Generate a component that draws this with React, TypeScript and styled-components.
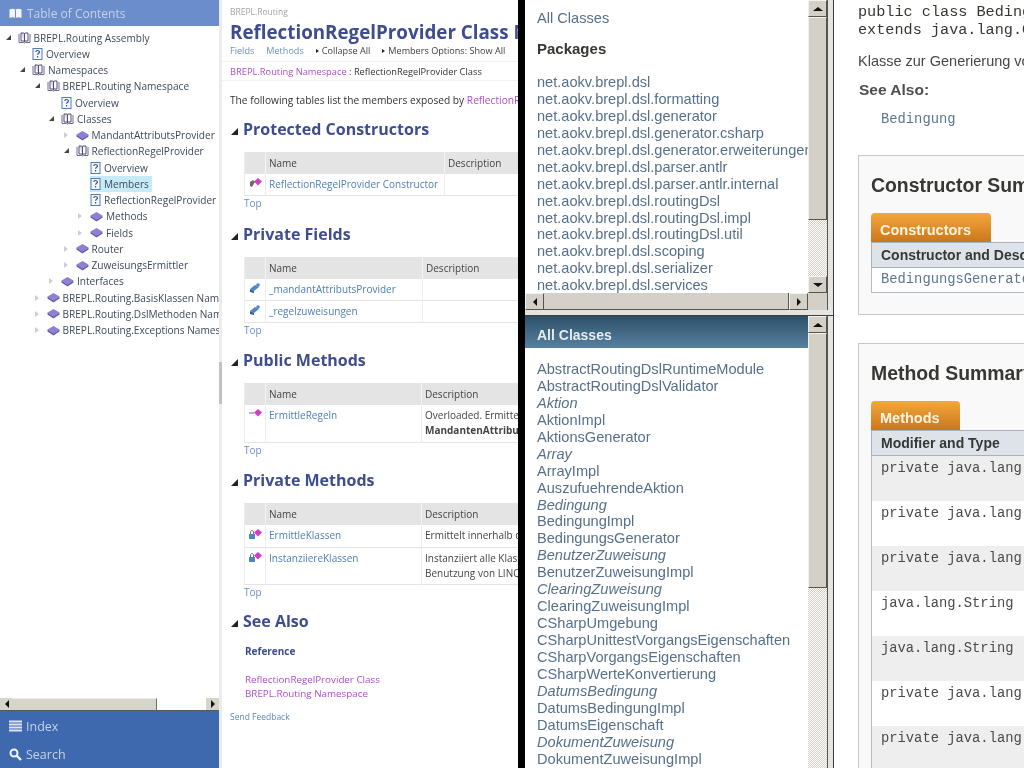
import React from "react";
import styled, { createGlobalStyle } from "styled-components";

const GlobalStyle = createGlobalStyle`
  html, body { margin: 0; padding: 0; background: #fff; overflow: hidden; }
  * { box-sizing: border-box; }
`;

const Page = styled.div`
  display: flex;
  width: 1024px;
  height: 768px;
  overflow: hidden;
  background: #fff;
  filter: blur(0.35px);
`;

/* ---------- shared win98 style scrollbar bits ---------- */

const ScrollBtn = styled.div<{ $size?: number }>`
  flex: none;
  width: ${(p) => p.$size ?? 19}px;
  height: ${(p) => p.$size ?? 17}px;
  display: flex;
  align-items: center;
  justify-content: center;
  background: #d4d0c8;
  border: 1px solid;
  border-color: #f4f2ec #55534e #55534e #f4f2ec;
`;

const Arrow = styled.i<{ $dir: "up" | "down" | "left" | "right" }>`
  display: block;
  width: 0;
  height: 0;
  border-style: solid;
  border-color: transparent;
  ${(p) =>
    p.$dir === "up"
      ? "border-width: 0 5px 4px 5px; border-bottom-color: #111;"
      : p.$dir === "down"
      ? "border-width: 4px 5px 0 5px; border-top-color: #111;"
      : p.$dir === "left"
      ? "border-width: 4px 4px 4px 0; border-right-color: #111;"
      : "border-width: 4px 0 4px 4px; border-left-color: #111;"}
`;

const Thumb = styled.div<{ $length: number; $axis: "x" | "y" }>`
  flex: none;
  ${(p) => (p.$axis === "y" ? `height: ${p.$length}px; width: 100%;` : `width: ${p.$length}px; height: 100%;`)}
  background: #d4d0c8;
  border: 1px solid;
  border-color: #f4f2ec #55534e #55534e #f4f2ec;
`;

const Dither = styled.div`
  flex: 1;
  background-color: #fff;
  background-image: repeating-conic-gradient(#d4d0c8 0 25%, #fff 0 50%);
  background-size: 2px 2px;
`;

/* ---------- left table of contents ---------- */

const TocPanel = styled.aside`
  flex: none;
  width: 219px;
  height: 100%;
  display: flex;
  flex-direction: column;
  font-family: "Open Sans", sans-serif;
`;

const TocHeader = styled.header`
  flex: none;
  height: 26px;
  display: flex;
  align-items: center;
  gap: 5px;
  padding-left: 9px;
  background: #6c8dcb;
  color: #c6d3ec;
  font-size: 12px;
`;

const Tree = styled.div`
  flex: 1;
  overflow: hidden;
  padding-top: 3.5px;
`;

const TreeRow = styled.div<{ $level: number }>`
  height: 16.25px;
  display: flex;
  align-items: center;
  padding-left: ${(p) => 4.5 + p.$level * 14.5}px;
  color: #3f4a58;
  font-size: 10.1px;
  white-space: nowrap;
`;

const Twist = styled.span<{ $open?: boolean; $none?: boolean }>`
  flex: none;
  width: 11px;
  height: 8px;
  position: relative;
  &::before {
    content: "";
    position: absolute;
    left: 1px;
    top: 1px;
    width: 0;
    height: 0;
    border-style: solid;
    ${(p) =>
      p.$none
        ? "border-width: 0;"
        : p.$open
        ? "border-width: 0 0 5px 5px; border-color: transparent transparent #444 transparent;"
        : "border-width: 3.5px 0 3.5px 4px; border-color: transparent transparent transparent #ccd0d4;"}
  }
`;

const TreeLabel = styled.span<{ $selected?: boolean }>`
  display: inline-flex;
  align-items: center;
  gap: 3px;
  padding: 1px 3px 1px 0;
  margin-left: 2px;
  background: ${(p) => (p.$selected ? "#c4ebf7" : "transparent")};
`;

const TocScroll = styled.div`
  flex: none;
  height: 13px;
  display: flex;
  background: #fff;
  border-bottom: 1px solid #5a5a58;
`;

const TocThumb = styled.div`
  width: 144px;
  background: #d7d5ca;
  border-right: 1px solid #6f6f6a;
  border-top: 1px solid #eeece4;
`;

const TocScrollBtn = styled.div`
  flex: none;
  width: 13px;
  display: flex;
  align-items: center;
  justify-content: center;
  background: #d7d5ca;
`;

const TocGap = styled.div`
  flex: 1;
`;

const TocFooter = styled.footer`
  flex: none;
  height: 57px;
  background: #3e69ae;
  display: flex;
  flex-direction: column;
  padding-top: 1px;
`;

const TocFooterItem = styled.div`
  height: 29.5px;
  display: flex;
  align-items: center;
  gap: 4px;
  padding-left: 9px;
  color: #c4d2ea;
  font-size: 12.5px;
`;

/* ---------- help viewer content ---------- */

const Splitter = styled.div`
  flex: none;
  width: 3px;
  height: 100%;
  background: #ececec;
  display: flex;
  flex-direction: column;
`;

const SplitterGrip = styled.div`
  height: 42px;
  margin-top: 362px;
  background: #c2c2c2;
`;

const HelpPane = styled.main`
  flex: none;
  width: 296px;
  height: 100%;
  overflow: hidden;
  padding-left: 8px;
  font-family: "Open Sans", sans-serif;
  font-size: 10px;
  color: #333;
  white-space: nowrap;
`;

const Crumb = styled.div`
  height: 12px;
  margin-top: 6px;
  line-height: 12px;
  font-size: 8.5px;
  color: #a2a2a2;
`;

const PageTitle = styled.h1`
  margin: 0;
  height: 24px;
  line-height: 28px;
  font-size: 18.8px;
  font-weight: 700;
  color: #3f4d8e;
`;

const LinkBar = styled.nav`
  height: 20px;
  display: flex;
  align-items: center;
  gap: 12px;
  font-size: 9.1px;
  border-bottom: 1px solid #f2f2f2;
  margin-left: -8px;
  padding-left: 8px;
  padding-bottom: 3px;
`;

const NavLink = styled.span`
  color: #6a8fc4;
`;

const Action = styled.span`
  color: #3c3c3c;
  &::before {
    content: "";
    display: inline-block;
    border-style: solid;
    border-width: 2.5px 0 2.5px 3px;
    border-color: transparent transparent transparent #222;
    margin-right: 3px;
    vertical-align: 1px;
  }
`;

const BreadcrumbBar = styled.div`
  height: 19px;
  line-height: 19px;
  margin-left: -8px;
  padding-left: 8px;
  border-bottom: 1px solid #f2f2f2;
  font-size: 9.3px;
`;

const MagentaLink = styled.span`
  color: #b04ccc;
`;

const Intro = styled.p`
  margin: 10px 0 0;
  height: 20px;
  line-height: 18px;
  font-size: 10.2px;
`;

const Section = styled.section<{ $top: number }>`
  margin-top: ${(p) => p.$top}px;
  margin-left: 1px;
`;

const SectionTitle = styled.h2`
  margin: 0;
  height: 22px;
  display: flex;
  align-items: center;
  gap: 5px;
  font-size: 16px;
  font-weight: 700;
  color: #3f4d8e;
  &::before {
    content: "";
    width: 0;
    height: 0;
    border-style: solid;
    border-width: 0 0 7px 7px;
    border-color: transparent transparent #222 transparent;
    margin-top: 4px;
  }
`;

const MemberTable = styled.div<{ $nameWidth: number }>`
  margin: 12px 0 0 13px;
  width: 400px;
  display: grid;
  grid-template-columns: 21px ${(p) => p.$nameWidth}px 1fr;
  border-left: 1px solid #ececec;
`;

const HeadCell = styled.div`
  height: 22px;
  line-height: 22px;
  padding-left: 3px;
  background: #e4e4e4;
  border-right: 1px solid #f4f4f4;
  color: #444;
`;

const BodyCell = styled.div<{ $h: number }>`
  height: ${(p) => p.$h}px;
  line-height: 14.5px;
  padding: 3px 0 0 3px;
  border-right: 1px solid #ececec;
  border-bottom: 1px solid #e4e4e4;
  color: #444;
  overflow: hidden;
`;

const MemberName = styled.span`
  color: #4d80b8;
`;

const TopLink = styled.div`
  margin-left: 13px;
  height: 15px;
  line-height: 15px;
  color: #6a8fc4;
`;

const SubHead = styled.div`
  margin: 11px 0 0 14px;
  height: 16px;
  line-height: 16px;
  font-weight: 700;
  color: #3f4d8e;
`;

const RefList = styled.div`
  margin: 14px 0 0 14px;
  line-height: 14px;
  font-size: 9.8px;
  color: #b04ccc;
`;

const Feedback = styled.div`
  margin-top: 9px;
  height: 14px;
  line-height: 14px;
  font-size: 8.5px;
  color: #5f86ba;
`;

/* ---------- javadoc frames ---------- */

const BlackBar = styled.div`
  flex: none;
  width: 7px;
  height: 100%;
  background: #000;
`;

const FramesColumn = styled.div`
  flex: none;
  width: 308px;
  height: 100%;
  display: flex;
  flex-direction: column;
  background: #e6e4de;
  font-family: "Liberation Sans", Arial, sans-serif;
  font-size: 14.6px;
  color: #56708a;
  white-space: nowrap;
`;

const PackagesFrame = styled.div`
  flex: none;
  height: 316px;
  display: flex;
  flex-direction: column;
  border-bottom: 1px solid #3d3d3a;
`;

const FrameBody = styled.div`
  flex: 1;
  min-height: 0;
  display: flex;
`;

const FrameView = styled.div`
  flex: none;
  width: 283px;
  height: 100%;
  overflow: hidden;
  background: #fff;
`;

const VBar = styled.div`
  flex: none;
  width: 19px;
  height: 100%;
  display: flex;
  flex-direction: column;
`;

const FrameEdge = styled.div`
  flex: none;
  width: 6px;
  height: 100%;
  background: #e6e4de;
  border-left: 1px solid #55534e;
`;

const HBarRow = styled.div`
  flex: none;
  height: 17px;
  display: flex;
`;

const HBar = styled.div`
  flex: none;
  width: 283px;
  display: flex;
  background: #d4d0c8;
`;

const HThumb = styled.div`
  flex: 1;
  background: #d4d0c8;
  border-right: 1px solid #55534e;
  border-bottom: 1px solid #55534e;
`;

const HCorner = styled.div`
  flex: none;
  width: 19px;
  background: #d4d0c8;
`;

const FrameGap = styled.div`
  flex: none;
  height: 5px;
  background: #e6e4de;
`;

const ClassesFrame = styled.div`
  flex: 1;
  min-height: 0;
  display: flex;
`;

const FrameIndent = styled.div`
  padding-left: 12px;
`;

const AllClassesLink = styled.div`
  margin-top: 10px;
  height: 17px;
  line-height: 17px;
`;

const PackagesTitle = styled.h2`
  margin: 13px 0 0;
  height: 17px;
  line-height: 17px;
  font-size: 15px;
  font-weight: 700;
  color: #353833;
`;

const PackageList = styled.div`
  margin-top: 17px;
`;

const ListLine = styled.div<{ $italic?: boolean }>`
  height: 16.95px;
  line-height: 16.95px;
  font-style: ${(p) => (p.$italic ? "italic" : "normal")};
`;

const ClassesBanner = styled.div`
  height: 32px;
  line-height: 39px;
  padding-left: 12px;
  background: linear-gradient(#2f5069, #56819f);
  font-size: 14px;
  font-weight: 700;
  color: #e6edf2;
`;

const ClassList = styled.div`
  margin-top: 13px;
`;

const EdgeLine = styled.div`
  flex: none;
  width: 1px;
  height: 100%;
  background: #3c3c3a;
`;

/* ---------- javadoc class page ---------- */

const DocPane = styled.div`
  flex: 1;
  min-width: 0;
  height: 100%;
  overflow: hidden;
  padding-left: 24px;
  font-family: "Liberation Sans", Arial, sans-serif;
  color: #474747;
  white-space: nowrap;
`;

const Signature = styled.pre`
  margin: 3px 0 0;
  font-family: "Liberation Mono", monospace;
  font-size: 15.2px;
  line-height: 18px;
  color: #353833;
`;

const DocText = styled.p`
  margin: 14px 0 0;
  height: 16px;
  line-height: 16px;
  font-size: 14.5px;
`;

const SeeAlso = styled.div`
  margin: 12px 0 0 1px;
  height: 18px;
  line-height: 18px;
  font-size: 15.5px;
  font-weight: 700;
  color: #4e4e4e;
`;

const SeeAlsoLink = styled.div`
  margin: 13px 0 0 23px;
  height: 16px;
  line-height: 16px;
  font-family: "Liberation Mono", monospace;
  font-size: 13.8px;
  color: #5b7690;
`;

const SummaryBox = styled.section<{ $top: number; $height: number }>`
  margin-top: ${(p) => p.$top}px;
  width: 400px;
  height: ${(p) => p.$height}px;
  padding: 18px 0 0 12px;
  background: #f9f9f9;
  border: 1px solid #c6c9cc;
`;

const SummaryTitle = styled.h3`
  margin: 0;
  height: 22px;
  line-height: 22px;
  font-size: 19.4px;
  font-weight: 700;
  color: #353833;
`;

const Tab = styled.div<{ $width: number }>`
  width: ${(p) => p.$width}px;
  height: 29px;
  margin-top: 17px;
  padding: 8px 0 0 9px;
  line-height: 18px;
  font-size: 14.5px;
  font-weight: 700;
  color: #fdf3df;
  background: linear-gradient(#f4a73c, #c9771c);
  border-radius: 4px 4px 0 0;
`;

const TableHead = styled.div`
  height: 26px;
  line-height: 25px;
  padding-left: 9px;
  background: #dee3e9;
  border: 1px solid #a6b2bf;
  border-right: 0;
  font-size: 14px;
  font-weight: 700;
  color: #353833;
`;

const CtorRow = styled.div`
  height: 25px;
  line-height: 24px;
  padding-left: 9px;
  background: #fff;
  border: 1px solid #b4bcc5;
  border-top: 0;
  border-right: 0;
  font-family: "Liberation Mono", monospace;
  font-size: 13.8px;
  color: #5b7690;
`;

const MethodRow = styled.div<{ $odd: boolean }>`
  height: 45px;
  padding: 4px 0 0 9px;
  line-height: 17px;
  background: ${(p) => (p.$odd ? "#eeeeef" : "#fff")};
  border-left: 1px solid #b4bcc5;
  font-family: "Liberation Mono", monospace;
  font-size: 13.8px;
  color: #4a4a48;
`;

/* ---------- little drawings ---------- */

const Book = () => (
  <svg width="13" height="12" viewBox="0 0 13 12">
    <path d="M1 2v8.500h4.500c.6 0 1 .3 1 .8.1-.5.5-.8 1-.8H12V2" fill="#fff" stroke="#6d6a95" />
    <path d="M3 1h2.500c.6 0 1 .4 1 1v8M10 1H7.500c-.6 0-1 .4-1 1" fill="#dcd8ee" stroke="#4d4a78" />
    <path d="M3 1v8h3.500M10 1v8H6.500" fill="none" stroke="#4d4a78" />
  </svg>
);

const HelpPage = () => (
  <svg width="11" height="12" viewBox="0 0 11 12">
    <rect x="1" y="0.500" width="9" height="11" fill="#f6f8fd" stroke="#4e7cc0" />
    <path d="M3.800 4c0-2 3.600-2 3.600 0 0 1.400-1.800 1.300-1.800 2.800M5.600 8v1.500" fill="none" stroke="#3b4f88" strokeWidth="1.200" />
  </svg>
);

const Cube = () => (
  <svg width="13" height="11" viewBox="0 0 13 11">
    <path d="M6.500 1l6 3.500-6 4-6-4z" fill="#8f7fd6" />
    <path d="M.5 4.500v2l6 4v-2zM12.500 4.500v2l-6 4v-2z" fill="#6a5aa6" />
  </svg>
);

const BookIconLight = () => (
  <svg width="13" height="11" viewBox="0 0 13 11">
    <path d="M0.500 1.500c2-1 4.500-1 6 .3 1.500-1.300 4-1.300 6-.3V10c-2-1-4.500-1-6 .3C5 9 2.500 9 .5 10z" fill="#f2f5fb" />
    <path d="M6.500 2v8" stroke="#6c8dcb" />
  </svg>
);

const IndexIcon = () => (
  <svg width="13" height="12" viewBox="0 0 13 12">
    <path d="M0 1.500h13M0 4.500h13M0 7.500h13M0 10.500h13" stroke="#dde5f3" strokeWidth="2" />
  </svg>
);

const SearchIcon = () => (
  <svg width="13" height="13" viewBox="0 0 13 13">
    <circle cx="5" cy="5" r="3.500" fill="none" stroke="#f0f4fb" strokeWidth="2" />
    <path d="M7.500 7.500l4.500 4.500" stroke="#f0f4fb" strokeWidth="2.400" />
  </svg>
);

const MemberIcon = ({ kind }: { kind: "ctor" | "field" | "public" | "private" }) => (
  <svg width="15" height="12" viewBox="0 0 15 12">
    {kind === "field" ? (
      <>
        <path d="M2 7l5-4 4 2-5 4z" fill="#4f86c4" />
        <path d="M2 7v3l4 1V9z" fill="#33608f" />
        <circle cx="10" cy="3" r="1.800" fill="#4f86c4" />
      </>
    ) : (
      <>
        {kind === "public" ? (
          <path d="M1 5h5" stroke="#b9b2d6" strokeWidth="2" />
        ) : kind === "ctor" ? (
          <path d="M2 5l3-2 2 2-3 5-2-1z" fill="#6c6c6c" />
        ) : (
          <>
            <rect x="1" y="6" width="6" height="5" fill="#4f86c4" />
            <path d="M2.500 6V4c0-2 3-2 3 0v2" fill="none" stroke="#777" />
          </>
        )}
        <path d="M6 4.500l4-3.500 4 3.500-4 4z" fill="#d63cc8" />
      </>
    )}
  </svg>
);

/* ---------- data ---------- */

type TreeNode = { level: number; icon: "book" | "help" | "cube"; text: string; open?: boolean; leaf?: boolean; selected?: boolean };

const treeNodes: TreeNode[] = [
  { level: 0, icon: "book", text: "BREPL.Routing Assembly", open: true },
  { level: 1, icon: "help", text: "Overview", leaf: true },
  { level: 1, icon: "book", text: "Namespaces", open: true },
  { level: 2, icon: "book", text: "BREPL.Routing Namespace", open: true },
  { level: 3, icon: "help", text: "Overview", leaf: true },
  { level: 3, icon: "book", text: "Classes", open: true },
  { level: 4, icon: "cube", text: "MandantAttributsProvider" },
  { level: 4, icon: "book", text: "ReflectionRegelProvider", open: true },
  { level: 5, icon: "help", text: "Overview", leaf: true },
  { level: 5, icon: "help", text: "Members", leaf: true, selected: true },
  { level: 5, icon: "help", text: "ReflectionRegelProvider", leaf: true },
  { level: 5, icon: "cube", text: "Methods" },
  { level: 5, icon: "cube", text: "Fields" },
  { level: 4, icon: "cube", text: "Router" },
  { level: 4, icon: "cube", text: "ZuweisungsErmittler" },
  { level: 3, icon: "cube", text: "Interfaces" },
  { level: 2, icon: "cube", text: "BREPL.Routing.BasisKlassen Namespace" },
  { level: 2, icon: "cube", text: "BREPL.Routing.DslMethoden Namespace" },
  { level: 2, icon: "cube", text: "BREPL.Routing.Exceptions Namespace" },
];

const packages = [
  "net.aokv.brepl.dsl",
  "net.aokv.brepl.dsl.formatting",
  "net.aokv.brepl.dsl.generator",
  "net.aokv.brepl.dsl.generator.csharp",
  "net.aokv.brepl.dsl.generator.erweiterungen",
  "net.aokv.brepl.dsl.parser.antlr",
  "net.aokv.brepl.dsl.parser.antlr.internal",
  "net.aokv.brepl.dsl.routingDsl",
  "net.aokv.brepl.dsl.routingDsl.impl",
  "net.aokv.brepl.dsl.routingDsl.util",
  "net.aokv.brepl.dsl.scoping",
  "net.aokv.brepl.dsl.serializer",
  "net.aokv.brepl.dsl.services",
];

const classes: [string, boolean][] = [
  ["AbstractRoutingDslRuntimeModule", false],
  ["AbstractRoutingDslValidator", false],
  ["Aktion", true],
  ["AktionImpl", false],
  ["AktionsGenerator", false],
  ["Array", true],
  ["ArrayImpl", false],
  ["AuszufuehrendeAktion", false],
  ["Bedingung", true],
  ["BedingungImpl", false],
  ["BedingungsGenerator", false],
  ["BenutzerZuweisung", true],
  ["BenutzerZuweisungImpl", false],
  ["ClearingZuweisung", true],
  ["ClearingZuweisungImpl", false],
  ["CSharpUmgebung", false],
  ["CSharpUnittestVorgangsEigenschaften", false],
  ["CSharpVorgangsEigenschaften", false],
  ["CSharpWerteKonvertierung", false],
  ["DatumsBedingung", true],
  ["DatumsBedingungImpl", false],
  ["DatumsEigenschaft", false],
  ["DokumentZuweisung", true],
  ["DokumentZuweisungImpl", false],
];

const methodTypes = [
  "private java.lang",
  "private java.lang",
  "private java.lang",
  "java.lang.String",
  "java.lang.String",
  "private java.lang",
  "private java.lang",
];

const nodeIcon = (icon: TreeNode["icon"]) =>
  icon === "book" ? <Book /> : icon === "help" ? <HelpPage /> : <Cube />;

export default function App() {
  return (
    <Page>
      <GlobalStyle />

      <TocPanel>
        <TocHeader>
          <BookIconLight />
          Table of Contents
        </TocHeader>
        <Tree>
          {treeNodes.map((n, i) => (
            <TreeRow key={i} $level={n.level}>
              <Twist $open={n.open} $none={n.leaf} />
              <TreeLabel $selected={n.selected}>
                {nodeIcon(n.icon)}
                {n.text}
              </TreeLabel>
            </TreeRow>
          ))}
        </Tree>
        <TocScroll>
          <TocScrollBtn>
            <Arrow $dir="left" />
          </TocScrollBtn>
          <TocThumb />
          <TocGap />
          <TocScrollBtn>
            <Arrow $dir="right" />
          </TocScrollBtn>
        </TocScroll>
        <TocFooter>
          <TocFooterItem>
            <IndexIcon />
            Index
          </TocFooterItem>
          <TocFooterItem>
            <SearchIcon />
            Search
          </TocFooterItem>
        </TocFooter>
      </TocPanel>

      <Splitter>
        <SplitterGrip />
      </Splitter>

      <HelpPane>
        <Crumb>BREPL.Routing</Crumb>
        <PageTitle>ReflectionRegelProvider Class Members</PageTitle>
        <LinkBar>
          <NavLink>Fields</NavLink>
          <NavLink>Methods</NavLink>
          <Action>Collapse All</Action>
          <Action>Members Options: Show All</Action>
        </LinkBar>
        <BreadcrumbBar>
          <MagentaLink>BREPL.Routing Namespace</MagentaLink> : ReflectionRegelProvider Class
        </BreadcrumbBar>
        <Intro>
          The following tables list the members exposed by <MagentaLink>ReflectionRegelProvider</MagentaLink>.
        </Intro>

        <Section $top={7}>
          <SectionTitle>Protected Constructors</SectionTitle>
          <MemberTable $nameWidth={179}>
            <HeadCell />
            <HeadCell>Name</HeadCell>
            <HeadCell>Description</HeadCell>
            <BodyCell $h={22}>
              <MemberIcon kind="ctor" />
            </BodyCell>
            <BodyCell $h={22}>
              <MemberName>ReflectionRegelProvider Constructor</MemberName>
            </BodyCell>
            <BodyCell $h={22} />
          </MemberTable>
          <TopLink>Top</TopLink>
        </Section>

        <Section $top={12}>
          <SectionTitle>Private Fields</SectionTitle>
          <MemberTable $nameWidth={157}>
            <HeadCell />
            <HeadCell>Name</HeadCell>
            <HeadCell>Description</HeadCell>
            <BodyCell $h={22}>
              <MemberIcon kind="field" />
            </BodyCell>
            <BodyCell $h={22}>
              <MemberName>_mandantAttributsProvider</MemberName>
            </BodyCell>
            <BodyCell $h={22} />
            <BodyCell $h={22}>
              <MemberIcon kind="field" />
            </BodyCell>
            <BodyCell $h={22}>
              <MemberName>_regelzuweisungen</MemberName>
            </BodyCell>
            <BodyCell $h={22} />
          </MemberTable>
          <TopLink>Top</TopLink>
        </Section>

        <Section $top={11}>
          <SectionTitle>Public Methods</SectionTitle>
          <MemberTable $nameWidth={156}>
            <HeadCell />
            <HeadCell>Name</HeadCell>
            <HeadCell>Description</HeadCell>
            <BodyCell $h={38}>
              <MemberIcon kind="public" />
            </BodyCell>
            <BodyCell $h={38}>
              <MemberName>ErmittleRegeln</MemberName>
            </BodyCell>
            <BodyCell $h={38}>
              Overloaded. Ermittelt alle Regeln
              <br />
              <b>MandantenAttribute</b>
            </BodyCell>
          </MemberTable>
          <TopLink>Top</TopLink>
        </Section>

        <Section $top={11}>
          <SectionTitle>Private Methods</SectionTitle>
          <MemberTable $nameWidth={156}>
            <HeadCell />
            <HeadCell>Name</HeadCell>
            <HeadCell>Description</HeadCell>
            <BodyCell $h={23}>
              <MemberIcon kind="private" />
            </BodyCell>
            <BodyCell $h={23}>
              <MemberName>ErmittleKlassen</MemberName>
            </BodyCell>
            <BodyCell $h={23}>Ermittelt innerhalb der Assembly</BodyCell>
            <BodyCell $h={37}>
              <MemberIcon kind="private" />
            </BodyCell>
            <BodyCell $h={37}>
              <MemberName>InstanziiereKlassen</MemberName>
            </BodyCell>
            <BodyCell $h={37}>
              Instanziiert alle Klassen unter
              <br />
              Benutzung von LINQ
            </BodyCell>
          </MemberTable>
          <TopLink>Top</TopLink>
        </Section>

        <Section $top={10}>
          <SectionTitle>See Also</SectionTitle>
          <SubHead>Reference</SubHead>
          <RefList>
            ReflectionRegelProvider Class
            <br />
            BREPL.Routing Namespace
          </RefList>
        </Section>
        <Feedback>Send Feedback</Feedback>
      </HelpPane>

      <BlackBar />

      <FramesColumn>
        <PackagesFrame>
          <FrameBody>
            <FrameView>
              <FrameIndent>
                <AllClassesLink>All Classes</AllClassesLink>
                <PackagesTitle>Packages</PackagesTitle>
                <PackageList>
                  {packages.map((p) => (
                    <ListLine key={p}>{p}</ListLine>
                  ))}
                </PackageList>
              </FrameIndent>
            </FrameView>
            <VBar>
              <ScrollBtn>
                <Arrow $dir="up" />
              </ScrollBtn>
              <Thumb $axis="y" $length={203} />
              <Dither />
              <ScrollBtn>
                <Arrow $dir="down" />
              </ScrollBtn>
            </VBar>
            <FrameEdge />
          </FrameBody>
          <HBarRow>
            <HBar>
              <ScrollBtn>
                <Arrow $dir="left" />
              </ScrollBtn>
              <HThumb />
              <ScrollBtn>
                <Arrow $dir="right" />
              </ScrollBtn>
            </HBar>
            <HCorner />
            <FrameEdge />
          </HBarRow>
          <FrameGap />
        </PackagesFrame>

        <ClassesFrame>
          <FrameView>
            <ClassesBanner>All Classes</ClassesBanner>
            <FrameIndent>
              <ClassList>
                {classes.map(([name, italic]) => (
                  <ListLine key={name} $italic={italic}>
                    {name}
                  </ListLine>
                ))}
              </ClassList>
            </FrameIndent>
          </FrameView>
          <VBar>
            <ScrollBtn>
              <Arrow $dir="up" />
            </ScrollBtn>
            <Thumb $axis="y" $length={255} />
            <Dither />
          </VBar>
          <FrameEdge />
        </ClassesFrame>
      </FramesColumn>

      <EdgeLine />

      <DocPane>
        <Signature>
          public class BedingungsGenerator
          {"\n"}extends java.lang.Object
        </Signature>
        <DocText>Klasse zur Generierung von Bedingungen</DocText>
        <SeeAlso>See Also:</SeeAlso>
        <SeeAlsoLink>Bedingung</SeeAlsoLink>

        <SummaryBox $top={27} $height={160}>
          <SummaryTitle>Constructor Summary</SummaryTitle>
          <Tab $width={120}>Constructors</Tab>
          <TableHead>Constructor and Description</TableHead>
          <CtorRow>BedingungsGenerator()</CtorRow>
        </SummaryBox>

        <SummaryBox $top={28} $height={440}>
          <SummaryTitle>Method Summary</SummaryTitle>
          <Tab $width={89}>Methods</Tab>
          <TableHead>Modifier and Type</TableHead>
          {methodTypes.map((m, i) => (
            <MethodRow key={i} $odd={i % 2 === 0}>
              {m}
            </MethodRow>
          ))}
        </SummaryBox>
      </DocPane>
    </Page>
  );
}
